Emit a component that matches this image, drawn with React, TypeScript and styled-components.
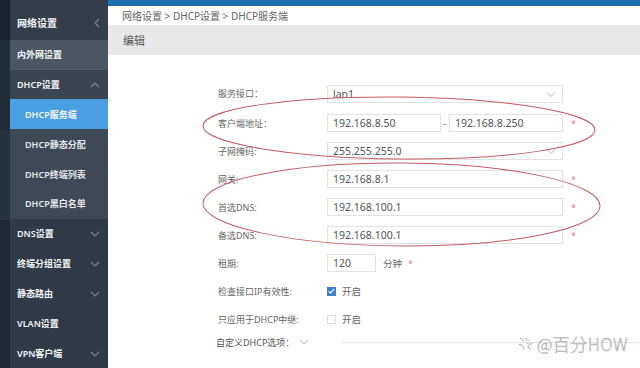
import * as React from "react";
import styled, { createGlobalStyle } from "styled-components";

const GlobalStyle = createGlobalStyle`
  html, body {
    margin: 0;
    padding: 0;
    background: #fff;
  }
  body {
    font-family: "Noto Sans", "Noto Sans CJK SC", sans-serif;
  }
`;

const Page = styled.div`
  position: relative;
  display: flex;
  width: 640px;
  height: 368px;
  overflow: hidden;
`;

const Strip = styled.div`
  width: 10px;
  flex-shrink: 0;
  background: linear-gradient(#1b2530 0, #1b2530 40px, #202c38 40px, #202c38 130px, #27323f 130px, #27323f 220px, #1f2a36 220px);
`;

const Sidebar = styled.nav`
  width: 98px;
  flex-shrink: 0;
  display: flex;
  flex-direction: column;
  background: #2f3a46;
`;

type Tone = "head" | "light" | "group" | "active" | "sub" | "plain";

const toneBg: Record<Tone, string> = {
  head: "#343e4a",
  light: "#4c5662",
  group: "#3b4551",
  active: "#4b9ee0",
  sub: "#3f4955",
  plain: "#2f3a46",
};

const NavItem = styled.div<{ $tone: Tone; $h?: number }>`
  height: ${(p) => p.$h ?? 30}px;
  display: flex;
  align-items: center;
  justify-content: space-between;
  padding-top: ${(p) => (p.$tone === "head" ? 6 : 0)}px;
  padding-left: ${(p) => (p.$tone === "active" || p.$tone === "sub" ? 15 : 7)}px;
  padding-right: 8px;
  box-sizing: border-box;
  font-size: ${(p) => (p.$tone === "head" ? 10 : 9)}px;
  font-weight: 600;
  background: ${(p) => toneBg[p.$tone]};
  color: ${(p) => (p.$tone === "sub" ? "#e4e8ec" : "#f4f6f8")};
`;

const Main = styled.main`
  flex: 1;
  display: flex;
  flex-direction: column;
  background: #fff;
`;

const TopBar = styled.div`
  height: 6px;
  background: #1e6fae;
`;

const Crumb = styled.div`
  height: 19px;
  display: flex;
  align-items: center;
  padding-left: 14px;
  font-size: 10px;
  color: #666;
`;

const EditBar = styled.div`
  height: 30px;
  display: flex;
  align-items: center;
  padding-left: 15px;
  background: #e8e8e8;
  font-size: 11px;
  color: #555;
`;

const Form = styled.div`
  display: flex;
  flex-direction: column;
  padding: 23px 0 0 110px;
`;

const Row = styled.div<{ $h?: number }>`
  display: flex;
  align-items: center;
  height: ${(p) => p.$h ?? 28}px;
`;

const Label = styled.div`
  width: 109px;
  flex-shrink: 0;
  font-size: 9px;
  color: #666;
  white-space: nowrap;
`;

const Field = styled.div<{ $w?: number }>`
  position: relative;
  width: ${(p) => p.$w ?? 236}px;
  height: 18px;
  box-sizing: border-box;
  border: 1px solid #e2e2e2;
  display: flex;
  align-items: center;
  padding-left: 5px;
  font-size: 10.5px;
  color: #555;
  flex-shrink: 0;
`;

const Chevron = styled.svg`
  position: absolute;
  right: 6px;
  top: 5px;
`;

const Dash = styled.span`
  width: 8px;
  text-align: center;
  font-size: 10px;
  color: #777;
`;

const Star = styled.span<{ $gap?: number }>`
  margin-left: ${(p) => p.$gap ?? 8}px;
  font-size: 9px;
  color: #e08080;
`;

const Unit = styled.span`
  margin-left: 7px;
  font-size: 9.5px;
  color: #666;
`;

const Check = styled.span<{ $on?: boolean }>`
  width: 9px;
  height: 9px;
  box-sizing: border-box;
  border: 1px solid ${(p) => (p.$on ? "#3a7fd2" : "#dcdcdc")};
  background: ${(p) => (p.$on ? "#3a7fd2" : "#fff")};
  display: inline-flex;
  align-items: center;
  justify-content: center;
  margin-right: 6px;
`;

const CheckText = styled.span`
  font-size: 9.5px;
  color: #666;
`;

const OptionRow = styled.div`
  display: flex;
  align-items: center;
  height: 18px;
  margin-left: -2px;
`;

const OptionLabel = styled.div`
  width: 126px;
  flex-shrink: 0;
  display: flex;
  align-items: center;
  gap: 6px;
  font-size: 9px;
  color: #555;
`;

const Rule = styled.div`
  flex: 1;
  height: 1px;
  background: #e4e4e4;
`;

const Marks = styled.svg`
  position: absolute;
  left: 0;
  top: 0;
  pointer-events: none;
`;

const Watermark = styled.div`
  position: absolute;
  right: 12px;
  bottom: 12px;
  display: flex;
  align-items: center;
  gap: 2px;
  font-size: 17px;
  font-weight: 300;
  color: #fff;
  -webkit-text-stroke: 0.6px #b0b0b0;
  font-family: "Noto Sans CJK SC", sans-serif;
  letter-spacing: 0.5px;
`;

const Down = ({ size = 9 }: { size?: number }): React.ReactElement => (
  <svg width={size} height={size * 0.6} viewBox="0 0 10 6" fill="none">
    <path d="M1 1l4 4 4-4" stroke="#9aa2ab" strokeWidth="1" />
  </svg>
);

const nav: { t: string; tone: Tone; icon?: string }[] = [
  { t: "内外网设置", tone: "light" },
  { t: "DHCP设置", tone: "group", icon: "up" },
  { t: "DHCP服务端", tone: "active" },
  { t: "DHCP静态分配", tone: "sub" },
  { t: "DHCP终端列表", tone: "sub" },
  { t: "DHCP黑白名单", tone: "sub" },
  { t: "DNS设置", tone: "plain", icon: "down" },
  { t: "终端分组设置", tone: "plain", icon: "down" },
  { t: "静态路由", tone: "plain", icon: "down" },
  { t: "VLAN设置", tone: "plain" },
  { t: "VPN客户端", tone: "plain", icon: "down" },
];

const NavIcon = ({ dir }: { dir: string }): React.ReactElement => {
  const d = dir === "up" ? "M1 6l4-4 4 4" : dir === "left" ? "M5 1L1 5l4 4" : "M1 2l4 4 4-4";
  return (
    <svg width={dir === "left" ? 6 : 10} height={dir === "left" ? 10 : 7} viewBox={dir === "left" ? "0 0 6 10" : "0 0 10 7"} fill="none">
      <path d={d} stroke="#7e8894" strokeWidth="1.1" />
    </svg>
  );
};

const Select = ({ value }: { value: string }): React.ReactElement => (
  <Field>
    {value}
    <Chevron width="10" height="7" viewBox="0 0 10 7" fill="none">
      <path d="M1 1.5l4 4 4-4" stroke="#b5b5b5" strokeWidth="1" />
    </Chevron>
  </Field>
);

export default function App(): React.ReactElement {
  return (
    <>
      <GlobalStyle />
      <Page>
        <Strip />
        <Sidebar>
          <NavItem $tone="head" $h={40}>
            网络设置
            <NavIcon dir="left" />
          </NavItem>
          {nav.map((n) => (
            <NavItem key={n.t} $tone={n.tone}>
              {n.t}
              {n.icon ? <NavIcon dir={n.icon} /> : null}
            </NavItem>
          ))}
        </Sidebar>
        <Main>
          <TopBar />
          <Crumb>网络设置 &gt; DHCP设置 &gt; DHCP服务端</Crumb>
          <EditBar>编辑</EditBar>
          <Form>
            <Row $h={31}>
              <Label>服务接口：</Label>
              <Select value="lan1" />
            </Row>
            <Row>
              <Label>客户端地址：</Label>
              <Field $w={114}>192.168.8.50</Field>
              <Dash>-</Dash>
              <Field $w={114}>192.168.8.250</Field>
              <Star>*</Star>
            </Row>
            <Row>
              <Label>子网掩码:</Label>
              <Select value="255.255.255.0" />
            </Row>
            <Row>
              <Label>网关:</Label>
              <Field>192.168.8.1</Field>
              <Star>*</Star>
            </Row>
            <Row>
              <Label>首选DNS:</Label>
              <Field>192.168.100.1</Field>
              <Star>*</Star>
            </Row>
            <Row>
              <Label>备选DNS:</Label>
              <Field>192.168.100.1</Field>
              <Star>*</Star>
            </Row>
            <Row>
              <Label>租期:</Label>
              <Field $w={49}>120</Field>
              <Unit>分钟</Unit>
              <Star $gap={6}>*</Star>
            </Row>
            <Row>
              <Label>检查接口IP有效性:</Label>
              <Check $on>
                <svg width="7" height="6" viewBox="0 0 7 6" fill="none">
                  <path d="M0.8 3.2l1.8 1.8L6.2 0.8" stroke="#fff" strokeWidth="1.2" />
                </svg>
              </Check>
              <CheckText>开启</CheckText>
            </Row>
            <Row>
              <Label>只应用于DHCP中继:</Label>
              <Check />
              <CheckText>开启</CheckText>
            </Row>
            <OptionRow>
              <OptionLabel>
                自定义DHCP选项：
                <Down size={8} />
              </OptionLabel>
              <Rule />
            </OptionRow>
          </Form>
        </Main>
        <Marks width="640" height="368" viewBox="0 0 640 368">
          <ellipse cx="399" cy="128" rx="196" ry="31" fill="none" stroke="#c85a64" strokeWidth="1" transform="rotate(0.6 399 128)" />
          <ellipse cx="401.5" cy="204.5" rx="198.5" ry="41.5" fill="none" stroke="#c85a64" strokeWidth="1" transform="rotate(0.4 401.5 204.5)" />
        </Marks>
        <Watermark>
          <svg width="18" height="17" viewBox="0 0 18 16" fill="none" stroke="#a9a9a9" strokeWidth="1">
            <path d="M3 3c2 0 3 1 3 3M9 2c0 2 1 3 3 3M2 9c3 0 5 2 5 5M10 8c2 1 5 1 6-1M11 10c0 2 1 4 3 4" />
          </svg>
          @百分HOW
        </Watermark>
      </Page>
    </>
  );
}
